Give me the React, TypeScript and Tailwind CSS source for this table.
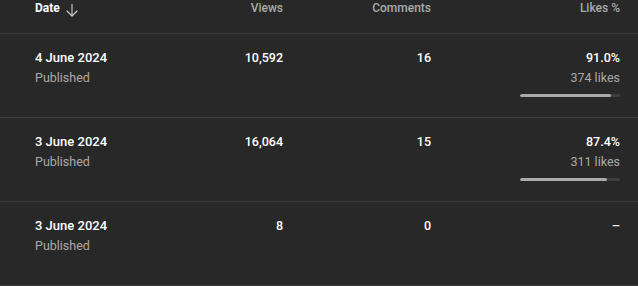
import React from "react";

type Row = {
  date: string;
  views: string;
  comments: string;
  pct?: string;
  likes?: string;
  fill?: number;
};

const rows: Row[] = [
  { date: "4 June 2024", views: "10,592", comments: "16", pct: "91.0%", likes: "374 likes", fill: 91 },
  { date: "3 June 2024", views: "16,064", comments: "15", pct: "87.4%", likes: "311 likes", fill: 87.4 },
  { date: "3 June 2024", views: "8", comments: "0" },
];

function ArrowDown() {
  return (
    <svg width="12" height="13" viewBox="0 0 12 13" fill="none" stroke="#cfcfcf" strokeWidth="1.1" strokeLinecap="round" strokeLinejoin="round">
      <path d="M6 0.5 V12" />
      <path d="M1 7 L6 12 L11 7" />
    </svg>
  );
}

export default function App() {
  return (
    <div
      className="w-[638px] h-[286px] bg-[#282828] text-[13px] overflow-hidden"
      style={{ fontFamily: "Roboto, 'Liberation Sans', sans-serif" }}
    >
      <div className="flex h-[34px] pl-[35px] pr-[18px] border-b border-[#3d3d3d] text-[12px] leading-[16px] font-medium text-[#aaaaaa]">
        <div className="flex-1 flex items-start gap-[6px]">
          <span className="font-bold text-white">Date</span>
          <span className="mt-[4px]">
            <ArrowDown />
          </span>
        </div>
        <div className="w-[100px] text-right">Views</div>
        <div className="w-[148px] text-right">Comments</div>
        <div className="w-[189px] text-right">Likes %</div>
      </div>
      {rows.map((r, i) => (
        <div
          key={i}
          className="flex h-[84px] pl-[35px] pr-[18px] pt-[14px] border-b border-[#3d3d3d] leading-[19px]"
        >
          <div className="flex-1 flex flex-col">
            <span className="font-medium text-white">{r.date}</span>
            <span className="mt-[1px] text-[12.5px] text-[#aaaaaa]">Published</span>
          </div>
          <div className="w-[100px] text-right font-medium text-[12.5px] text-white">{r.views}</div>
          <div className="w-[148px] text-right font-medium text-[12.5px] text-white">{r.comments}</div>
          <div className="w-[189px] flex flex-col items-end">
            {r.pct ? (
              <>
                <span className="font-medium text-[12.5px] text-white">{r.pct}</span>
                <span className="mt-[1px] text-[12.5px] text-[#aaaaaa]">{r.likes}</span>
                <div className="mt-[7px] w-[100px] h-[3px] rounded-full bg-[#3f3f3f] overflow-hidden">
                  <div className="h-full rounded-full bg-[#aaaaaa]" style={{ width: `${r.fill}%` }} />
                </div>
              </>
            ) : (
              <span className="font-medium text-white">–</span>
            )}
          </div>
        </div>
      ))}
    </div>
  );
}
